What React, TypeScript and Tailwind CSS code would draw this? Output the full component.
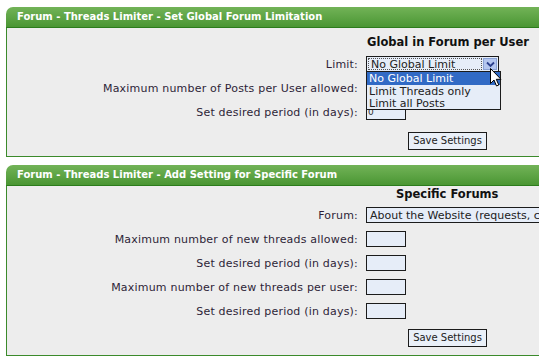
import React from "react";

const label = "w-[359px] shrink-0 text-right pr-[8px] tracking-[0.2px] text-[#2e1f38]";
const box = "h-[16px] w-[40px] border border-[#1b1b1b] bg-[#e6edf8]";

function Header({ title }: { title: string }) {
  return (
    <div className="h-[21px] rounded-tl-[7px] border-b border-[#2c7c1c] bg-gradient-to-b from-[#72b357] to-[#4a9633] pl-[11px] flex items-center text-white font-bold text-[10px] leading-none">
      {title}
    </div>
  );
}

function Row({ text, children }: { text: string; children: React.ReactNode }) {
  return (
    <div className="h-[24px] flex items-center">
      <span className={label}>{text}</span>
      {children}
    </div>
  );
}

function SaveButton() {
  return (
    <div className="flex pl-[401px]">
      <button className="h-[18px] w-[79px] border border-[#1b1b1b] bg-[#eaf0f8] text-[10px] text-[#222] leading-none">
        Save Settings
      </button>
    </div>
  );
}

function Cursor() {
  return (
    <svg width="13" height="20" viewBox="0 0 13 20" className="absolute left-[124px] top-[12px] z-20">
      <path d="M0.5 0.5 L0.5 15.5 L4 12 L6.5 18 L8.8 17 L6.3 11.3 L11 11.3 Z" fill="#fff" stroke="#000" strokeWidth="1" />
    </svg>
  );
}

export default function App() {
  return (
    <div className="w-[539px] h-[360px] overflow-hidden bg-white pt-[7px] pl-[6px] text-[11px] leading-none" style={{ fontFamily: '"DejaVu Sans", Verdana, sans-serif' }}>
      <div className="w-[620px]">
        <Header title="Forum - Threads Limiter - Set Global Forum Limitation" />
        <div className="border-l border-b border-[#3b8a2b] bg-[#ededed] pt-[5px] pb-[6px]">
          <div className="h-[19px] flex items-center pl-[360px] font-bold text-[11.5px] text-[#111]">Global in Forum per User</div>
          <Row text="Limit:">
            <div className="relative">
              <div className="h-[16px] w-[133px] border border-[#1b1b1b] bg-[#e6edf8] flex items-center">
                <div className="ml-[1px] h-[12px] flex-1 border border-dotted border-[#555] pl-[2px] flex items-center text-[#222]">No Global Limit</div>
                <div className="mx-[1px] h-[12px] w-[14px] bg-[#b4c6ef] border border-[#8aa2d6] flex items-center justify-center">
                  <svg width="9" height="7" viewBox="0 0 9 7"><path d="M1 1.5 L4.5 5 L8 1.5" fill="none" stroke="#2b3f8c" strokeWidth="1.8" /></svg>
                </div>
              </div>
              <div className="absolute left-0 top-[15px] z-10 w-[135px] border border-[#1b1b1b] bg-[#e6edf8] text-[#222]">
                <div className="h-[13px] bg-[#316ac5] text-white pl-[2px] flex items-center">No Global Limit</div>
                <div className="h-[12px] pl-[2px] flex items-center">Limit Threads only</div>
                <div className="h-[12px] pl-[2px] flex items-center">Limit all Posts</div>
              </div>
              <Cursor />
            </div>
          </Row>
          <Row text="Maximum number of Posts per User allowed:">
            <div className={box} />
          </Row>
          <Row text="Set desired period (in days):">
            <div className={box + " text-[9px] pl-[1px] flex items-center text-[#333]"}>0</div>
          </Row>
          <div className="h-[8px]" />
          <SaveButton />
        </div>
        <div className="h-[8px] bg-white" />
        <Header title="Forum - Threads Limiter - Add Setting for Specific Forum" />
        <div className="border-l border-b border-[#3b8a2b] bg-[#ededed] pb-[8px]">
          <div className="h-[17px] flex items-center pl-[389px] font-bold text-[11.5px] text-[#111]">Specific Forums</div>
          <Row text="Forum:">
            <div className="h-[16px] w-[240px] border border-[#1b1b1b] bg-[#e6edf8] pl-[3px] flex items-center text-[#222] whitespace-nowrap">About the Website (requests, comments)</div>
          </Row>
          <Row text="Maximum number of new threads allowed:">
            <div className={box} />
          </Row>
          <Row text="Set desired period (in days):">
            <div className={box} />
          </Row>
          <Row text="Maximum number of new threads per user:">
            <div className={box} />
          </Row>
          <Row text="Set desired period (in days):">
            <div className={box} />
          </Row>
          <div className="h-[6px]" />
          <SaveButton />
        </div>
      </div>
    </div>
  );
}
